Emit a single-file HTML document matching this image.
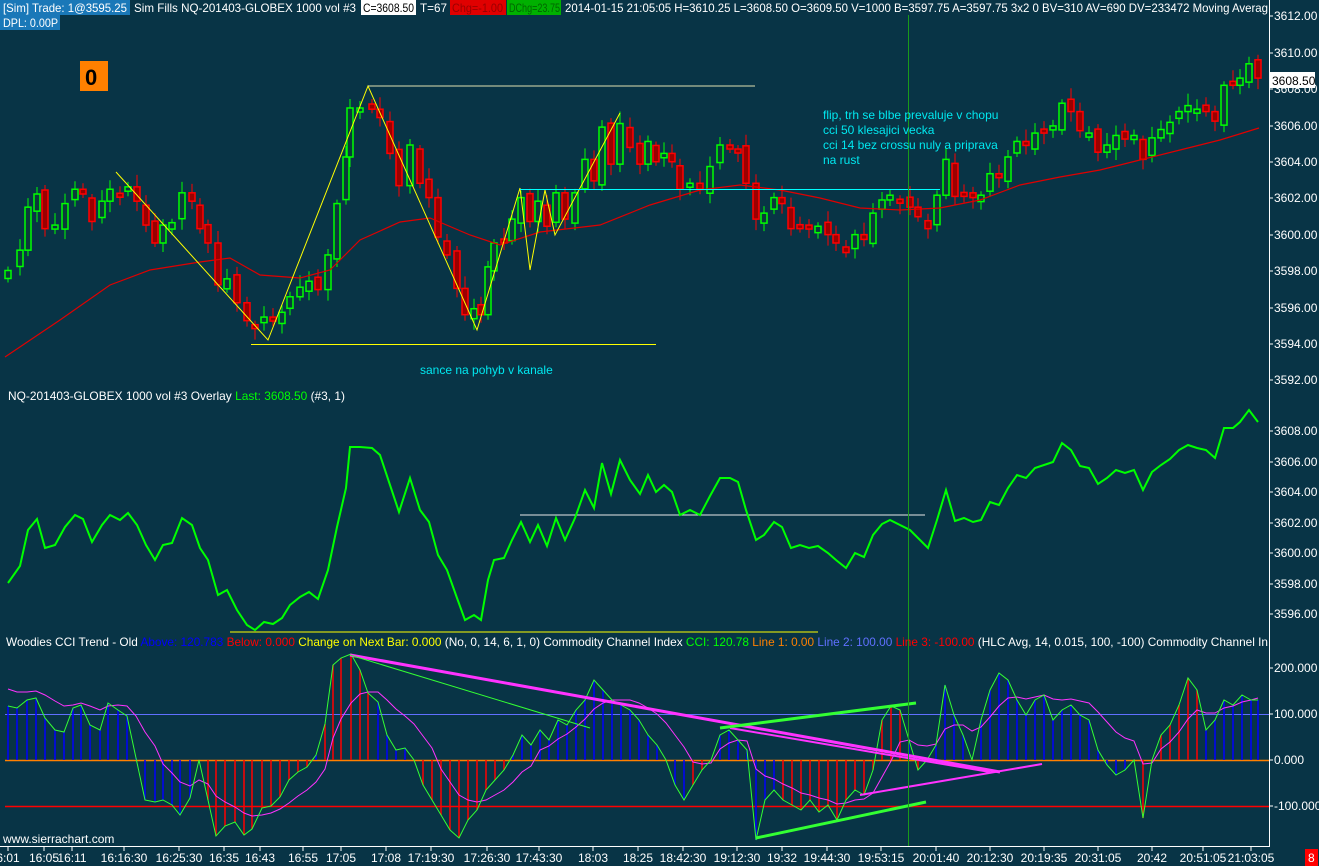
<!DOCTYPE html>
<html><head><meta charset="utf-8">
<style>
html,body{margin:0;padding:0;background:#083446;width:1319px;height:866px;overflow:hidden}
svg{display:block;font-family:"Liberation Sans",sans-serif;font-size:12px}
</style></head>
<body>
<svg id="s" width="1319" height="866" xmlns="http://www.w3.org/2000/svg">
<rect width="1319" height="866" fill="#083446"/>
<rect x="0" y="0" width="130" height="15" fill="#1a78b8"/>
<text x="3" y="12" fill="#fff" textLength="124" lengthAdjust="spacingAndGlyphs">[Sim]  Trade: 1@3595.25</text>
<text x="134" y="12" fill="#fff" textLength="222" lengthAdjust="spacingAndGlyphs">Sim Fills  NQ-201403-GLOBEX  1000 vol  #3</text>
<rect x="361" y="0" width="55" height="15" fill="#fff"/>
<text x="363" y="12" fill="#000" textLength="51" lengthAdjust="spacingAndGlyphs">C=3608.50</text>
<text x="420" y="12" fill="#fff" textLength="27" lengthAdjust="spacingAndGlyphs">T=67</text>
<rect x="450" y="0" width="56" height="15" fill="#e00000"/>
<text x="452" y="12" fill="#900" textLength="51" lengthAdjust="spacingAndGlyphs">Chg=-1.00</text>
<rect x="507" y="0" width="54" height="15" fill="#00b000"/>
<text x="509" y="12" fill="#060" textLength="51" lengthAdjust="spacingAndGlyphs">DChg=23.75</text>
<text x="565" y="12" fill="#fff" textLength="703" lengthAdjust="spacingAndGlyphs">2014-01-15 21:05:05 H=3610.25 L=3608.50 O=3609.50 V=1000 B=3597.75 A=3597.75 3x2 0 BV=310 AV=690 DV=233472 Moving Averag</text>
<rect x="0" y="15" width="60" height="15" fill="#1a78b8"/>
<text x="3" y="27" fill="#fff" textLength="55" lengthAdjust="spacingAndGlyphs">DPL: 0.00P</text>
<rect x="80" y="61" width="28" height="30" fill="#ff8000"/>
<text x="85" y="85" fill="#000" font-size="22" font-weight="bold">0</text>
<g id="g"></g>
<line x1="1269.5" y1="0" x2="1269.5" y2="847" stroke="#fff"/>
<line x1="0" y1="846.5" x2="1270" y2="846.5" stroke="#fff"/>
<line x1="908.5" y1="15" x2="908.5" y2="846" stroke="#1a9a1a"/>
<rect x="1270" y="72" width="45" height="16" fill="#fff"/>
<text x="1272" y="85" fill="#000">3608.50</text>
<text x="420" y="374" fill="#00e8f0">sance na pohyb v kanale</text>
<text x="823" y="119" fill="#00e8f0">flip, trh se blbe prevaluje v chopu</text>
<text x="823" y="134" fill="#00e8f0">cci 50 klesajici vecka</text>
<text x="823" y="149" fill="#00e8f0">cci 14 bez crossu nuly a priprava</text>
<text x="823" y="164" fill="#00e8f0">na rust</text>
<text x="8" y="400" fill="#fff" textLength="337" lengthAdjust="spacingAndGlyphs">NQ-201403-GLOBEX  1000 vol  #3 Overlay  <tspan fill="#00ff00">Last: 3608.50</tspan>   (#3, 1)</text>
<text x="6" y="646" fill="#fff" textLength="1262" lengthAdjust="spacingAndGlyphs">Woodies CCI Trend - Old  <tspan fill="#0000ff">Above: 120.783</tspan>  <tspan fill="#ff0000">Below: 0.000</tspan>  <tspan fill="#ffff00">Change on Next Bar: 0.000</tspan>   (No, 0, 14, 6, 1, 0)  Commodity Channel Index  <tspan fill="#00ff00">CCI: 120.78</tspan>  <tspan fill="#ff8000">Line 1: 0.00</tspan>  <tspan fill="#6070ff">Line 2: 100.00</tspan>  <tspan fill="#ff0000">Line 3: -100.00</tspan>   (HLC Avg, 14, 0.015, 100, -100)  Commodity Channel In</text>
<text x="3" y="843" fill="#fff">www.sierrachart.com</text>
<rect x="1305" y="849" width="13" height="17" fill="#ff0000"/>
<text x="1308" y="862" fill="#fff">8</text>
</svg>
<script>
var g=document.getElementById('g'),h='';
function L(x1,y1,x2,y2,c,w){h+='<line x1="'+x1+'" y1="'+y1+'" x2="'+x2+'" y2="'+y2+'" stroke="'+c+'" stroke-width="'+(w||1)+'"/>';}
function P(pts,c,w){h+='<polyline fill="none" stroke="'+c+'" stroke-width="'+(w||1)+'" points="'+pts.map(function(p){return p.join(',')}).join(' ')+'"/>';}
function T(x,y,t,a){h+='<text x="'+x+'" y="'+y+'" fill="#fff"'+(a?' text-anchor="middle"':'')+'>'+t+'</text>';}
[[3612,16],[3610,53],[3608,89],[3606,126],[3604,162],[3602,198],[3600,235],[3598,271],[3596,308],[3594,344],[3592,380]].forEach(function(a){L(1269,a[1],1273,a[1],'#fff');T(1274,a[1]+4,a[0].toFixed(2));});
[[3608,431],[3606,462],[3604,492],[3602,523],[3600,553],[3598,584],[3596,614]].forEach(function(a){L(1269,a[1],1273,a[1],'#fff');T(1274,a[1]+4,a[0].toFixed(2));});
[['200.000',668],['100.000',714],['0.000',760],['-100.000',806]].forEach(function(a){L(1269,a[1],1273,a[1],'#fff');T(1274,a[1]+4,a[0]);});
[['6:01',8],['16:05',44],['16:11',72],['16:16:30',124],['16:25:30',179],['16:35',224],['16:43',260],['16:55',303],['17:05',341],['17:08',386],['17:19:30',431],['17:26:30',487],['17:43:30',539],['18:03',593],['18:25',638],['18:42:30',683],['19:12:30',737],['19:32',782],['19:44:30',827],['19:53:15',881],['20:01:40',936],['20:12:30',990],['20:19:35',1044],['20:31:05',1098],['20:42',1152],['20:51:05',1203],['21:03:05',1251]].forEach(function(a){L(a[1],847,a[1],851,'#fff');T(a[1],862,a[0],1);});
var m=[[8,583],[20,566],[28,530],[37,519],[45,548],[55,545],[65,527],[75,515],[83,519],[92,542],[102,525],[110,515],[120,520],[128,513],[137,525],[146,545],[155,560],[163,545],[172,543],[182,518],[192,525],[200,548],[208,560],[218,595],[227,590],[237,610],[247,625],[255,630],[264,622],[273,624],[282,618],[290,605],[300,597],[309,592],[318,599],[328,570],[337,527],[346,488],[350,447],[360,447],[372,448],[380,455],[390,485],[399,512],[410,478],[420,510],[429,522],[438,555],[447,570],[457,598],[465,620],[474,615],[481,620],[488,580],[494,560],[504,558],[512,540],[521,522],[530,542],[538,525],[547,546],[556,518],[565,540],[575,518],[585,490],[594,508],[602,463],[611,494],[620,460],[630,480],[640,494],[648,475],[656,492],[664,485],[672,492],[680,515],[690,510],[700,515],[710,496],[720,478],[730,478],[738,482],[746,510],[756,540],[764,535],[774,522],[782,527],[791,548],[800,545],[809,548],[818,546],[828,553],[836,560],[846,568],[855,553],[864,557],[873,535],[882,524],[890,520],[900,525],[910,530],[918,538],[928,548],[937,520],[946,490],[955,521],[964,518],[973,522],[981,520],[990,502],[999,505],[1008,488],[1017,475],[1026,478],[1035,468],[1044,465],[1053,462],[1062,443],[1071,450],[1080,466],[1089,468],[1098,484],[1107,478],[1116,470],[1125,473],[1134,470],[1143,490],[1152,472],[1161,465],[1170,459],[1179,450],[1188,445],[1197,448],[1206,450],[1215,458],[1224,428],[1233,428],[1240,422],[1249,410],[1258,422]];
L(520,515,925,515,'#e8e8e8');L(230,632,818,632,'#ffff00');
P(m,'#00ff00',2);
function my(y){var p=3608-(y-431)/15.25;return 16+(3612-p)*18.22;}
var prev=my(m[0][1])+8;
m.forEach(function(p,i){var c=my(p[1]),o=prev,x=p[0];var up=c<o;var t=Math.min(o,c),b=Math.max(o,c);if(b-t<4){b=t+4;}
var hi=t-4-(i*7%9),lo=b+4+(i*5%8);
L(x,hi,x,lo,up?'#00ff00':'#ff0000');
h+='<rect x="'+(x-3)+'" y="'+t+'" width="6" height="'+(b-t)+'" fill="'+(up?'#0a3a3a':'#9a0000')+'" stroke="'+(up?'#00ff00':'#ff0000')+'" stroke-width="1.5"/>';
prev=c+((i%3)-1)*4;});
P([[5,357],[60,320],[110,285],[150,270],[200,262],[230,258],[260,275],[300,278],[330,270],[360,240],[400,222],[430,218],[470,235],[500,245],[540,232],[600,225],[650,205],[700,190],[740,185],[780,190],[820,198],[860,208],[900,210],[940,208],[980,200],[1020,185],[1060,177],[1100,170],[1140,160],[1180,150],[1220,140],[1259,128]],'#e00000',1.2);
P([[116,172],[268,340],[368,86],[477,330],[520,188],[530,270],[545,190],[555,235],[620,113]],'#ffff00',1);
L(368,86,755,86,'#e0e0b0');L(251,344.5,656,344.5,'#ffff00');L(520,189.5,940,189.5,'#00ffff');
L(5,714.5,1269,714.5,'#6070ff');L(5,760.5,1269,760.5,'#ff8000',1.5);L(5,806.5,1269,806.5,'#ff0000',1.5);
var c=[[8,706],[17,708],[27,700],[36,698],[45,718],[55,730],[64,732],[73,708],[81,705],[90,725],[100,730],[108,703],[118,710],[127,716],[136,758],[145,800],[155,802],[163,800],[172,805],[180,815],[190,798],[199,760],[208,800],[216,836],[225,826],[235,822],[244,835],[252,829],[262,808],[271,806],[280,797],[289,780],[298,772],[307,767],[316,755],[325,724],[333,665],[341,658],[351,654],[360,670],[368,693],[378,702],[387,735],[396,750],[405,748],[414,760],[423,785],[432,800],[441,815],[450,830],[459,838],[468,820],[477,810],[486,790],[495,780],[504,770],[513,755],[522,735],[531,745],[540,730],[549,740],[558,720],[567,725],[576,710],[585,700],[594,680],[603,690],[612,700],[621,705],[630,710],[639,720],[648,735],[657,745],[666,760],[675,785],[684,800],[693,785],[702,770],[711,760],[720,735],[729,730],[738,740],[747,750],[756,840],[765,800],[774,790],[783,800],[792,805],[801,810],[810,800],[819,812],[828,805],[837,820],[846,800],[855,790],[864,795],[873,770],[882,720],[891,706],[900,710],[909,740],[918,770],[927,760],[936,745],[945,685],[954,715],[963,735],[972,760],[981,720],[990,690],[999,673],[1008,680],[1017,700],[1026,715],[1035,700],[1044,695],[1053,720],[1062,710],[1071,705],[1080,715],[1089,720],[1098,750],[1107,765],[1116,775],[1125,770],[1134,760],[1143,818],[1152,760],[1161,735],[1170,725],[1179,705],[1188,678],[1197,690],[1206,730],[1215,720],[1224,700],[1233,705],[1242,695],[1251,700],[1258,700]];
c.forEach(function(p){var x=p[0],red=(p[1]>760)||(x>320&&x<375)||(x>875&&x<905)||(x>1155&&x<1200);if(p[1]>760&&((x>130&&x<200)||(x>660&&x<690)||(x>750&&x<780)||(x>1090&&x<1140)))red=false;L(x,760,x,p[1],red?'#ff0000':'#0000ff',1.5);});
var e=695,mg=c.map(function(p){e=e+(p[1]-e)*0.22;return [p[0],Math.round(e-(e<760?8:0))];});
P(mg,'#ff33ff',1);
P(c,'#33ff33',1);
L(350,655,1000,772,'#ff33ff',3);L(730,728,990,772,'#ff33ff',2);L(860,795,1042,764,'#ff33ff',2);
L(350,655,590,728,'#33ff33',1);L(720,728,916,703,'#33ff33',3);L(756,838,926,802,'#33ff33',3);
g.innerHTML=h;
</script>
</body></html>
